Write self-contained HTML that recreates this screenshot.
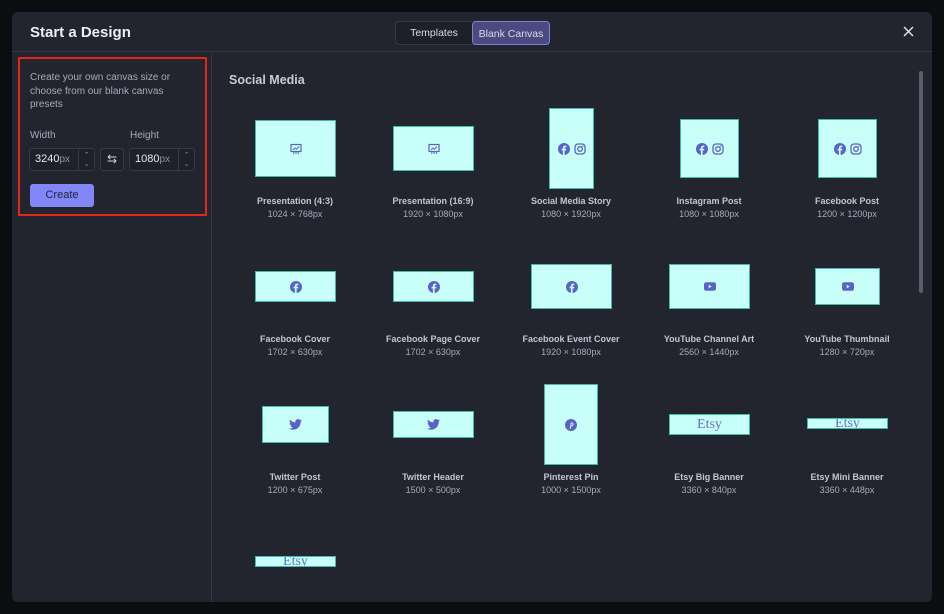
<!DOCTYPE html>
<html><head><meta charset="utf-8"><style>
*{margin:0;padding:0;box-sizing:border-box}
body{width:944px;height:614px;background:#0c0d11;font-family:"Liberation Sans",sans-serif;position:relative;overflow:hidden}
.modal{position:absolute;left:12px;top:12px;width:920px;height:590px;background:#22242e;border-radius:6px;overflow:hidden}
.hdr{position:absolute;left:0;top:0;width:920px;height:40px;border-bottom:1px solid #33364a}
.title{position:absolute;left:18px;top:12px;color:#eceef5;font-size:15px;font-weight:bold}
.tabs{position:absolute;left:383px;top:9px;width:155px;height:24px;border:1px solid #353847;border-radius:4px;background:#1e2029}
.tab{position:absolute;top:0;height:22px;line-height:22px;font-size:10.5px;color:#d8dae6;text-align:center}
.tab.on{left:76px;width:78px;top:-1px;height:24px;line-height:24px;background:#4a4a7e;border:1px solid #7d7fd8;border-radius:4px;color:#d8d9f5}
.x{position:absolute;left:891px;top:14px}
.left{position:absolute;left:0;top:41px;width:200px;height:549px;border-right:1px solid #33364a}
.red{position:absolute;left:6px;top:45px;width:189px;height:159px;border:2px solid #e0271a}
.desc{position:absolute;left:18px;top:59px;width:160px;font-size:10px;line-height:13.5px;color:#a7aabb}
.lbl{position:absolute;top:118px;font-size:10px;color:#a7aabb}
.inp{position:absolute;top:136px;height:23px;border:1px solid #353847;border-radius:3px;background:#1f2129}
.inp span{position:absolute;left:5px;top:4px;font-size:11px;color:#e6e8f0}
.inp span i{font-style:normal;color:#8d90a2;font-size:10px}
.spin{position:absolute;right:0;top:0;width:16px;height:21px;border-left:1px solid #353847;color:#8d90a2;font-size:7px;text-align:center;line-height:9px;padding-top:2px}
.create{position:absolute;left:18px;top:172px;width:64px;height:23px;background:#8187f6;border-radius:3px;color:#1f2140;font-size:11px;text-align:center;line-height:23px}
.sec{position:absolute;left:217px;top:61px;color:#c9cbd6;font-size:12.5px;font-weight:bold}
.sb{position:absolute;left:907px;top:59px;width:4px;height:222px;background:#5a5d6c;border-radius:2px}
.c{position:absolute;background:#c9fff9;border:1.5px solid #46b8ad;display:flex;align-items:center;justify-content:center;gap:4px;overflow:hidden}
.n{position:absolute;width:138px;text-align:center;font-size:9px;font-weight:bold;color:#c3c5d2}
.d{position:absolute;width:138px;text-align:center;font-size:9px;color:#a7aabb}
.etsy{font-family:"Liberation Serif",serif;color:#6670cf;font-size:14px}
</style></head><body>
<div class="modal">
<div class="hdr"><div class="title">Start a Design</div>
<div class="tabs"><div class="tab" style="left:0;width:76px">Templates</div><div class="tab on">Blank Canvas</div></div>
<svg class="x" width="11" height="11"><path d="M1 1L10 10M10 1L1 10" stroke="#e8e8ee" stroke-width="1.4"/></svg></div>
<div class="left"></div>
<div class="red"></div>
<div class="desc">Create your own canvas size or choose from our blank canvas presets</div>
<div class="lbl" style="left:18px">Width</div><div class="lbl" style="left:118px">Height</div>
<div class="inp" style="left:17px;width:66px"><span>3240<i>px</i></span><div class="spin">⌃<br>⌄</div></div>
<div class="inp" style="left:88px;width:24px;color:#d0d2dc;font-size:12px;text-align:center;line-height:21px">⇆</div>
<div class="inp" style="left:117px;width:66px"><span>1080<i>px</i></span><div class="spin">⌃<br>⌄</div></div>
<div class="create">Create</div>
<div class="sec">Social Media</div>
<div class="sb"></div>
</div>
<svg width="0" height="0" style="position:absolute"><defs>
<symbol id="pr" viewBox="0 0 12 12"><rect x="1" y="1.5" width="10" height="7" fill="none" stroke="#5b63c9" stroke-width="1.2"/><path d="M3 7l2-2 1.5 1.2L9 3.5M4 9l-.5 2M6 9v2M8 9l.5 2" stroke="#5b63c9" fill="none" stroke-width="1"/></symbol>
<symbol id="fb" viewBox="0 0 12 12"><circle cx="6" cy="6" r="6" fill="#5b63c9"/><path d="M6.6 12V7.4h1.5l.2-1.6H6.6V4.9c0-.5.2-.8.8-.8h.9V2.7c-.2 0-.7-.1-1.3-.1-1.3 0-2.1.8-2.1 2.2v1H3.6v1.6h1.3V12z" fill="#c9fff9"/></symbol>
<symbol id="ig" viewBox="0 0 12 12"><rect x="1" y="1" width="10" height="10" rx="3" fill="none" stroke="#5b63c9" stroke-width="1.3"/><circle cx="6" cy="6" r="2.3" fill="none" stroke="#5b63c9" stroke-width="1.3"/><circle cx="8.8" cy="3.2" r=".7" fill="#5b63c9"/></symbol>
<symbol id="yt" viewBox="0 0 14 10"><rect width="14" height="10" rx="2.5" fill="#5b63c9"/><path d="M5.5 3v4l3.5-2z" fill="#c9fff9"/></symbol>
<symbol id="tw" viewBox="0 0 24 20"><path d="M24 2.4c-.9.4-1.8.6-2.8.8 1-.6 1.800-1.600 2.200-2.700-1 .6-2 1-3.100 1.200C19.300.6 18 0 16.600 0c-2.700 0-4.900 2.200-4.900 4.900 0 .4 0 .8.1 1.100C7.700 5.800 4.100 3.900 1.700.9c-.4.7-.7 1.600-.7 2.500 0 1.700.9 3.200 2.200 4.100-.8 0-1.600-.2-2.200-.6v.1c0 2.400 1.700 4.400 3.900 4.800-.4.1-.8.2-1.300.2-.3 0-.6 0-.9-.1.6 2 2.400 3.400 4.600 3.400-1.700 1.300-3.800 2.100-6.100 2.100-.4 0-.8 0-1.200-.1 2.200 1.400 4.800 2.200 7.500 2.200 9.100 0 14-7.500 14-14v-.6c1-.7 1.800-1.600 2.500-2.500z" fill="#5b63c9"/></symbol>
<symbol id="pi" viewBox="0 0 12 12"><circle cx="6" cy="6" r="6" fill="#5b63c9"/><path d="M5.2 9.8l.8-3.4M6 6.4c-.6-1.8.6-3 1.6-2.3 1 .7.2 3-1 2.8-.6-.1-.7-.6-.6-1" stroke="#c9fff9" stroke-width="1" fill="none"/></symbol>
</defs></svg>
<div id="g"></div>
<script>
const P='<svg width="12" height="12"><use href="#pr"/></svg>',F='<svg width="12" height="12"><use href="#fb"/></svg>',I='<svg width="12" height="12"><use href="#ig"/></svg>',Y='<svg width="12" height="9"><use href="#yt"/></svg>',T='<svg width="13" height="11"><use href="#tw"/></svg>',Pi='<svg width="12" height="12"><use href="#pi"/></svg>',E='<span class="etsy">Etsy</span>';
const items=[
[255,120,81,57,P,"Presentation (4:3)","1024 × 768px",0],[393,126,81,45,P,"Presentation (16:9)","1920 × 1080px",1],[549,108,45,81,F+I,"Social Media Story","1080 × 1920px",2],[680,119,59,59,F+I,"Instagram Post","1080 × 1080px",3],[818,119,59,59,F+I,"Facebook Post","1200 × 1200px",4],
[255,271,81,31,F,"Facebook Cover","1702 × 630px",0],[393,271,81,31,F,"Facebook Page Cover","1702 × 630px",1],[531,264,81,45,F,"Facebook Event Cover","1920 × 1080px",2],[669,264,81,45,Y,"YouTube Channel Art","2560 × 1440px",3],[815,268,65,37,Y,"YouTube Thumbnail","1280 × 720px",4],
[262,406,67,37,T,"Twitter Post","1200 × 675px",0],[393,411,81,27,T,"Twitter Header","1500 × 500px",1],[544,384,54,81,Pi,"Pinterest Pin","1000 × 1500px",2],[669,414,81,21,E,"Etsy Big Banner","3360 × 840px",3],[807,418,81,11,E,"Etsy Mini Banner","3360 × 448px",4],
[255,556,81,11,E,"","",0]];
const ny=[196,334,472];let h='';
items.forEach((t,i)=>{const cx=295+138*t[7];h+=`<div class="c" style="left:${t[0]}px;top:${t[1]}px;width:${t[2]}px;height:${t[3]}px">${t[4]}</div>`;
if(t[5]){const y=ny[Math.floor(i/5)];h+=`<div class="n" style="left:${cx-69}px;top:${y}px">${t[5]}</div><div class="d" style="left:${cx-69}px;top:${y+13}px">${t[6]}</div>`;}});
document.getElementById('g').innerHTML=h;
</script>
</body></html>
